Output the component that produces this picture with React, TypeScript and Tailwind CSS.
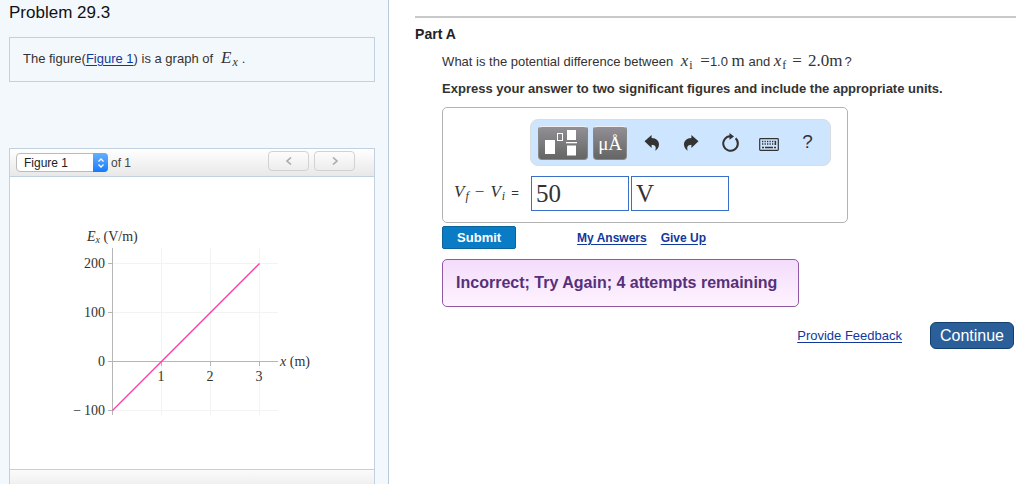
import React from 'react';

const linkClass = 'text-[#12389b] underline underline-offset-2';

function MathVar({ name, sub, roman = false }: { name: string; sub: string; roman?: boolean }) {
  return (
    <span className="font-['Liberation_Serif',serif] text-[17px] leading-none italic">
      {name}
      <sub className={roman ? 'pl-px text-[12px] not-italic' : 'pl-px text-[12px]'}>{sub}</sub>
    </span>
  );
}

function FieldGraph() {
  const xTicks = [1, 2, 3];
  const yTicks = [200, 100, 0, -100];

  return (
    <svg
      className="block w-[260px] h-[200px] font-['Liberation_Serif',serif]"
      viewBox="0 0 260 200"
      role="img"
      aria-label="Graph of Ex against x"
    >
      {xTicks.map((v) => (
        <line key={v} x1={50.5 + v * 49} x2={50.5 + v * 49} y1="23" y2="190" stroke="#f3f3f3" />
      ))}
      {yTicks.map((v) => (
        <line key={v} x1="50" x2="216" y1={136.5 - v * 0.49} y2={136.5 - v * 0.49} stroke="#f3f3f3" />
      ))}
      <line x1="50.5" x2="50.5" y1="23" y2="190" stroke="#b5b5b5" />
      <line x1="46" x2="216" y1="136.5" y2="136.5" stroke="#b5b5b5" />
      {yTicks.map((v) => (
        <g key={v}>
          <line x1="46" x2="50" y1={136.5 - v * 0.49} y2={136.5 - v * 0.49} stroke="#b5b5b5" />
          <text x="43" y={141 - v * 0.49} textAnchor="end" fontSize="14" fill="#333">
            {v < 0 ? `−\u2009${-v}` : v}
          </text>
        </g>
      ))}
      {xTicks.map((v) => (
        <g key={v}>
          <line x1={50.5 + v * 49} x2={50.5 + v * 49} y1="137" y2="141" stroke="#b5b5b5" />
          <text x={50 + v * 49} y="156" textAnchor="middle" fontSize="14" fill="#333">
            {v}
          </text>
        </g>
      ))}
      <line x1="50.5" y1="185.5" x2="197.5" y2="38.5" stroke="#ff3fa8" strokeWidth="1.3" />
      <text x="25" y="16" fontSize="14" fill="#333">
        <tspan fontStyle="italic">E</tspan>
        <tspan fontStyle="italic" fontSize="10" dy="2">x</tspan>
        <tspan dy="-2"> (V/m)</tspan>
      </text>
      <text x="218" y="141" fontSize="14" fill="#333">
        <tspan fontStyle="italic">x</tspan> (m)
      </text>
    </svg>
  );
}

function UndoIcon({ className = '' }: { className?: string }) {
  return (
    <svg className={`w-4 h-4 ${className}`} viewBox="0 0 16 16" fill="#333">
      <path d="M0.500 6.300 7.600 0v3.100c4.800.2 7.400 2.900 7.400 6.500 0 2.500-1.300 4.600-3.800 6.200 1.300-3.800.4-5.900-3.600-6.100V13z" />
    </svg>
  );
}

function ResetIcon() {
  return (
    <svg className="w-5 h-5" viewBox="0 0 20 20" fill="none" stroke="#333">
      <path d="M15.600 5.200A7.300 7.300 0 1 1 10 3.200" strokeWidth="2" />
      <path d="M9.500 0 14 3.400 9.500 6.800z" fill="#333" stroke="none" />
    </svg>
  );
}

function KeyboardIcon() {
  return (
    <svg className="mt-[3px] w-5 h-[13px]" viewBox="0 0 20 13" fill="none" stroke="#333">
      <rect x="0.700" y="0.700" width="18.600" height="11.600" rx="0.800" strokeWidth="1.200" />
      <path d="M3 3.500h14M3 6h14" strokeWidth="1.300" strokeDasharray="1.300 1.200" />
      <path d="M3 9.500h2M6 9.500h8M15 9.500h2M16.500 3v4" strokeWidth="1.300" />
    </svg>
  );
}

function TemplateIcon() {
  return (
    <svg className="mr-1 w-8 h-7" viewBox="0 0 32 28" fill="#fff">
      <rect x="0" y="11" width="10" height="14" />
      <rect x="12.500" y="4.500" width="5" height="7" fill="none" stroke="#fff" />
      <rect x="22" y="1" width="9" height="10" />
      <rect x="21" y="13" width="11" height="1.300" />
      <rect x="22" y="16.500" width="9" height="10" />
    </svg>
  );
}

function FigurePanel() {
  return (
    <section className="mt-[66px] flex flex-1 flex-col border border-b-0 border-[#c1d1df] bg-white">
      <div className="flex h-7 items-center border-b border-[#c1d1df] bg-gradient-to-b from-white to-[#e8e8e8] pl-1.5 pr-[19px]">
        <div className="relative">
          <select
            aria-label="Figure"
            className="block h-[19px] w-[92px] appearance-none rounded border border-[#bbb] bg-white pl-[7px] text-[12px] leading-4 text-[#222]"
          >
            <option>Figure 1</option>
          </select>
          <span className="pointer-events-none absolute inset-y-0 right-0 flex w-[15px] items-center justify-center rounded-r bg-gradient-to-b from-[#64b0fa] to-[#0f7bfb]">
            <svg className="h-3 w-2" viewBox="0 0 8 12" fill="none" stroke="#fff" strokeWidth="1.300">
              <path d="M1.500 4.500 4 2l2.500 2.500M1.500 7.500 4 10l2.500-2.500" />
            </svg>
          </span>
        </div>
        <span className="ml-[3px] text-[12px] text-[#444]">of 1</span>
        <div className="mb-1 ml-auto flex gap-[5px]">
          <button aria-label="Previous figure" className="flex h-5 w-[41px] items-center justify-center rounded-sm border border-[#d2d2d2]">
            <svg className="h-2 w-2" viewBox="0 0 8 8" fill="none" stroke="#aaa" strokeWidth="1.600">
              <path d="M6 0.500 2 4l4 3.500" />
            </svg>
          </button>
          <button aria-label="Next figure" className="flex h-5 w-[41px] items-center justify-center rounded-sm border border-[#d2d2d2]">
            <svg className="h-2 w-2" viewBox="0 0 8 8" fill="none" stroke="#aaa" strokeWidth="1.600">
              <path d="M2 0.500 6 4 2 7.500" />
            </svg>
          </button>
        </div>
      </div>
      <div className="pb-11 pl-[52px] pt-12">
        <FieldGraph />
      </div>
      <div className="min-h-3 flex-1 border-t border-[#c1d1df] bg-gradient-to-b from-[#fbfbfb] to-[#f0f0f0]" />
    </section>
  );
}

function AnswerBox() {
  const toolButton = 'flex w-[39px] items-center justify-center';
  const darkButton =
    'flex h-[34px] items-center justify-center rounded border border-[#888] border-t-[#eee] bg-gradient-to-b from-[#929096] to-[#656565] text-white';
  const field =
    "h-[35px] w-[98px] border border-[#3a6fc9] bg-white px-1 font-['Liberation_Serif',serif] text-[25px] text-[#333]";

  return (
    <div className="mt-2 w-[406px] max-w-full rounded-[5px] border border-[#b3b3b3] pb-[11px] pl-[11px] pr-4 pt-[11px]">
      <div className="ml-auto flex h-[47px] w-[301px] items-center rounded-lg border border-[#dadde0] bg-[#cde5ff] pl-[7px]">
        <button aria-label="Templates" className={`${darkButton} w-[50px]`}>
          <TemplateIcon />
        </button>
        <button aria-label="Units" className={`${darkButton} ml-[5px] mr-[5px] w-[34px] pt-1 font-['Liberation_Serif',serif] text-[19px]`}>
          μÅ
        </button>
        <button aria-label="Undo" className={toolButton}>
          <UndoIcon />
        </button>
        <button aria-label="Redo" className={toolButton}>
          <UndoIcon className="-scale-x-100" />
        </button>
        <button aria-label="Reset" className={toolButton}>
          <ResetIcon />
        </button>
        <button aria-label="Keyboard shortcuts" className={toolButton}>
          <KeyboardIcon />
        </button>
        <button aria-label="Help" className={`${toolButton} text-[19px] text-[#333]`}>
          ?
        </button>
      </div>
      <div className="mt-[10px] flex items-center gap-0.5">
        <label htmlFor="value" className="w-[75px] pb-1 text-[13px] whitespace-nowrap">
          <MathVar name="V" sub="f" />
          <span className="mx-1.5 font-['Liberation_Serif',serif] text-[17px]">−</span>
          <MathVar name="V" sub="i" />
          <span className="ml-1.5">=</span>
        </label>
        <input id="value" className={field} defaultValue="50" />
        <input aria-label="Units" className={field} defaultValue="V" />
      </div>
    </div>
  );
}

export default function App() {
  return (
    <div className="flex min-h-screen bg-white font-['Liberation_Sans',Arial,sans-serif] text-[13px] text-[#333]">
      <aside className="flex w-[38%] shrink-0 flex-col border-r border-[#b9cbdb] bg-[#f3f8fd] pl-[9px] pr-[13px]">
        <h1 className="pt-[3px] text-[17px] leading-5 text-[#111]">Problem 29.3</h1>
        <div className="mt-[14px] flex h-[45px] items-center border border-[#c1d1df] px-[13px]">
          <p className="pb-0.5">
            The figure(<a href="#figure" className={linkClass}>Figure 1</a>) is a graph of
            <span className="ml-2 mr-1">
              <MathVar name="E" sub="x" />
            </span>
            .
          </p>
        </div>
        <FigurePanel />
      </aside>

      <main className="min-w-0 flex-1 pl-[26px] pr-2 pt-4">
        <hr className="border-t-2 border-[#c8c8c8]" />
        <h2 className="mt-2 text-[14px] font-bold leading-4 text-[#222]">Part A</h2>
        <div className="pl-[27px]">
          <p className="mt-2.5 leading-5">
            What is the potential difference between{' '}
            <span className="ml-1 mr-1">
              <MathVar name="x" sub="i" roman />
            </span>{' '}
            <span className="font-['Liberation_Serif',serif] text-[17px] leading-none">=</span>1.0{' '}
            <span className="font-['Liberation_Serif',serif] text-[17px] leading-none">m</span> and{' '}
            <MathVar name="x" sub="f" roman />
            <span className="ml-1.5 mr-1.5 font-['Liberation_Serif',serif] text-[17px] leading-none">=</span>
            <span className="mr-0.5 font-['Liberation_Serif',serif] text-[17px] leading-none">2.0m</span>?
          </p>
          <p className="mt-[7px] font-bold leading-5">
            Express your answer to two significant figures and include the appropriate units.
          </p>
          <AnswerBox />
          <div className="mt-[3px] flex items-center text-[12px] font-bold">
            <button className="h-[23px] w-[74px] rounded-xs border border-[#0b639c] bg-[#0a7cc5] text-[13px] text-white">
              Submit
            </button>
            <a href="#answers" className={`${linkClass} ml-[61px]`}>My Answers</a>
            <a href="#give-up" className={`${linkClass} ml-3.5`}>Give Up</a>
          </div>
          <p className="mt-2.5 flex h-12 w-[357px] max-w-full items-center rounded-[5px] border border-[#9158a5] bg-gradient-to-b from-[#f3dcfb] to-[#fff3ff] px-[13px] text-[16px] font-bold text-[#56307a]">
            Incorrect; Try Again; 4 attempts remaining
          </p>
        </div>
        <div className="mt-[15px] flex items-center justify-end gap-7 pr-0.5">
          <a href="#feedback" className={linkClass}>Provide Feedback</a>
          <button className="h-[27px] w-[84px] rounded-md border border-[#123f6e] bg-[#2a5f9a] text-[16px] text-white">
            Continue
          </button>
        </div>
      </main>
    </div>
  );
}
